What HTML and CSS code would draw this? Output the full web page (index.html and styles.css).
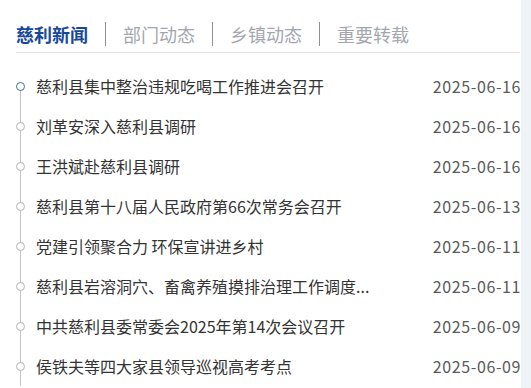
FILE: index.html
```html
<!DOCTYPE html>
<html lang="zh-CN">
<head>
    <meta charset="UTF-8">
    <meta name="viewport" content="width=device-width, initial-scale=1.0">
    <title>慈利新闻</title>
    <link rel="stylesheet" href="styles.css">
</head>
<body>
    <section class="news-box">
        <nav class="tabs">
            <span class="tab active">慈利新闻</span>
            <span class="tab">部门动态</span>
            <span class="tab">乡镇动态</span>
            <span class="tab">重要转载</span>
        </nav>

        <ul class="news-list">
            <li class="news-item current">
                <span class="dot"></span>
                <span class="title">慈利县集中整治违规吃喝工作推进会召开</span>
                <span class="date">2025-06-16</span>
            </li>
            <li class="news-item">
                <span class="dot"></span>
                <span class="title">刘革安深入慈利县调研</span>
                <span class="date">2025-06-16</span>
            </li>
            <li class="news-item">
                <span class="dot"></span>
                <span class="title">王洪斌赴慈利县调研</span>
                <span class="date">2025-06-16</span>
            </li>
            <li class="news-item">
                <span class="dot"></span>
                <span class="title">慈利县第十八届人民政府第66次常务会召开</span>
                <span class="date">2025-06-13</span>
            </li>
            <li class="news-item">
                <span class="dot"></span>
                <span class="title">党建引领聚合力 环保宣讲进乡村</span>
                <span class="date">2025-06-11</span>
            </li>
            <li class="news-item">
                <span class="dot"></span>
                <span class="title">慈利县岩溶洞穴、畜禽养殖摸排治理工作调度...</span>
                <span class="date">2025-06-11</span>
            </li>
            <li class="news-item">
                <span class="dot"></span>
                <span class="title">中共慈利县委常委会2025年第14次会议召开</span>
                <span class="date">2025-06-09</span>
            </li>
            <li class="news-item">
                <span class="dot"></span>
                <span class="title">侯铁夫等四大家县领导巡视高考考点</span>
                <span class="date">2025-06-09</span>
            </li>
        </ul>
    </section>
</body>
</html>
```

FILE: styles.css
```css
body {
    margin: 0;
    padding: 0;
    font-family: "Noto Sans CJK SC", "Noto Sans", sans-serif;
    background: linear-gradient(to right, #fff 521px, #eef3f8 521px);
    min-height: 100vh;
    overflow: hidden;
}

.news-box {
    width: 504px;
    margin-left: 16px;
    background: #fff;
}

.tabs {
    display: flex;
    align-items: center;
    padding: 22px 0 6px;
    border-bottom: 1px solid #e3e3e3;
}

.tab {
    font-size: 18px;
    line-height: 24px;
    color: #a3a7ad;
    padding: 0 17px;
    border-left: 1px solid #8e9196;
}

.tab:first-child {
    padding-left: 0;
    border-left: none;
}

.tab.active {
    color: #17489a;
    font-weight: 700;
}

.news-list {
    list-style: none;
    margin: 13px 0 0;
    padding: 0;
    background: linear-gradient(#c4c4c4, #c4c4c4) no-repeat 4px 20px / 1px 100%;
}

.news-item {
    display: flex;
    align-items: center;
    height: 40px;
    font-size: 16px;
}

.dot {
    flex-shrink: 0;
    width: 7px;
    height: 7px;
    border: 1px solid #b5b5b5;
    border-radius: 50%;
    background: #fff;
}

.current .dot {
    border-color: #3a6db5;
}

.title {
    flex: 1;
    margin-left: 11px;
    color: #333;
    white-space: nowrap;
    overflow: hidden;
}

.date {
    color: #5a5a5a;
    letter-spacing: 0.6px;
    margin-right: -1px;
}
```
